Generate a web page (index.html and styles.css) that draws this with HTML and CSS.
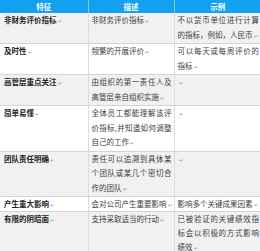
FILE: index.html
```html
<!DOCTYPE html>
<html>
<head>
<meta charset="utf-8">
<link rel="stylesheet" href="styles.css">
</head>
<body>
<table class="grid">
  <colgroup><col class="c1"><col class="c2"><col class="c3"></colgroup>
  <thead>
    <tr><th>特征</th><th>描述</th><th>示例</th></tr>
  </thead>
  <tbody>
    <tr class="alt">
      <td class="key">非财务评价指标<span class="pm">↵</span></td>
      <td>非财务评价指标<span class="pm">↵</span></td>
      <td>不以货币单位进行计算的指标，例如，人民币<span class="pm">↵</span></td>
    </tr>
    <tr>
      <td class="key">及时性<span class="pm">↵</span></td>
      <td>频繁的开展评价<span class="pm">↵</span></td>
      <td>可以每天或每周评价的指标<span class="pm">↵</span></td>
    </tr>
    <tr class="alt">
      <td class="key">高管层重点关注<span class="pm">↵</span></td>
      <td>由组织的第一责任人及高管层亲自组织实施<span class="pm">↵</span></td>
      <td><span class="pm">↵</span></td>
    </tr>
    <tr>
      <td class="key">简单易懂<span class="pm">↵</span></td>
      <td>全体员工都能理解该评价指标,并知道如何调整自己的工作<span class="pm">↵</span></td>
      <td><span class="pm">↵</span></td>
    </tr>
    <tr class="alt">
      <td class="key">团队责任明确<span class="pm">↵</span></td>
      <td>责任可以追溯到具体某个团队或某几个密切合作的团队<span class="pm">↵</span></td>
      <td><span class="pm">↵</span></td>
    </tr>
    <tr class="single">
      <td class="key">产生重大影响<span class="pm">↵</span></td>
      <td>会对公司产生重要影响<span class="pm">↵</span></td>
      <td>影响多个关键成果因素<span class="pm">↵</span></td>
    </tr>
    <tr class="alt last">
      <td class="key">有限的阴暗面<span class="pm">↵</span></td>
      <td>支持采取适当的行动<span class="pm">↵</span></td>
      <td>已被验证的关键绩效指标会以积极的方式影响绩效<span class="pm">↵</span></td>
    </tr>
  </tbody>
</table>
</body>
</html>
```
FILE: styles.css
```css
html, body {
  margin: 0;
  padding: 0;
  background: #ffffff;
}
body {
  font-family: "Noto Sans CJK SC", "Noto Sans", sans-serif;
  font-size: 7.5px;
  color: #3c3c3c;
  width: 260px;
  height: 251px;
  overflow: hidden;
}
.grid {
  width: 261px;
  border-collapse: collapse;
  table-layout: fixed;
}
.c1 { width: 88px; }
.c2 { width: 86px; }
.c3 { width: 87px; }
.grid th {
  background: #14a0ee;
  color: #ffffff;
  font-weight: bold;
  height: 13px;
  line-height: 13px;
  padding: 0;
  text-align: center;
  border-right: 1px solid #7cc8f4;
}
.grid th:last-child { border-right: none; }
.grid td {
  vertical-align: top;
  padding: 0 2px 0 3px;
  line-height: 14.5px;
  border-right: 1px solid #dcdcdc;
  border-bottom: 1px solid #d4d4d4;
  text-align: justify;
  word-break: break-all;
}
.grid td:last-child { border-right: none; }
.grid tr.alt td { background: #f1f1f1; }
.grid td.key {
  font-weight: bold;
  color: #222222;
  padding-left: 4px;
}
.grid tr.single td { line-height: 13px; }
.grid tr.last td {
  height: 44px;
  line-height: 14px;
  border-bottom: none;
}
.pm {
  display: inline-block;
  width: 0;
  white-space: nowrap;
  font-size: 5px;
  color: #9a9a9a;
  font-weight: normal;
  margin-left: 1px;
}
```
